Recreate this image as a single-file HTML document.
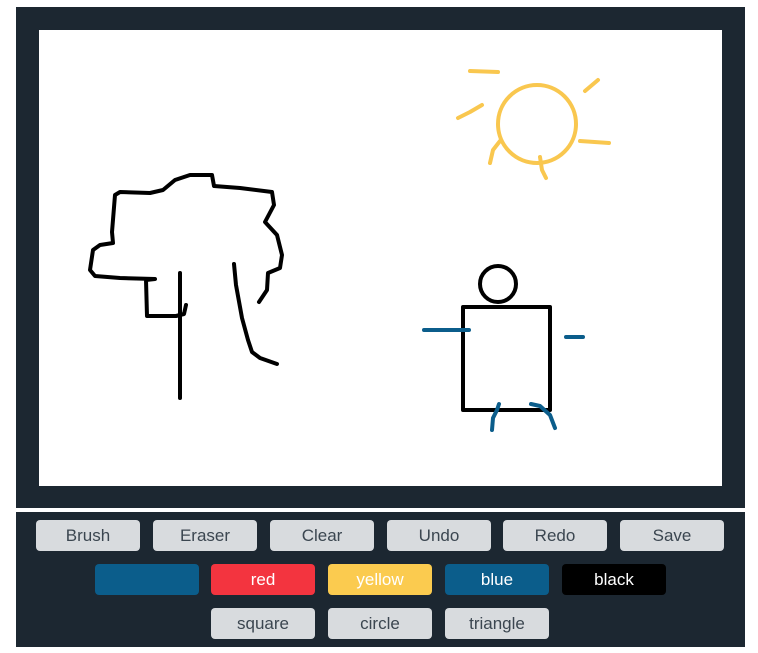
<!DOCTYPE html>
<html><head><style>
body{margin:0;width:758px;height:653px;background:#fff;position:relative;font-family:"Liberation Sans",sans-serif;overflow:hidden}
.frame{position:absolute;left:16px;top:7px;width:729px;height:501px;background:#1c2731}
.canvas{position:absolute;left:23px;top:23px;width:683px;height:456px;background:#fff}
.bar{position:absolute;left:16px;top:512px;width:729px;height:135px;background:#1c2731}
.b{position:absolute;height:31px;width:104px;border-radius:4px;background:#d8dbde;color:#3b4650;font-size:17px;text-align:center;line-height:31px}
.c{color:#fff}
</style></head><body>
<div class="frame"><div class="canvas"></div></div>
<svg style="position:absolute;left:0;top:0" width="758" height="510" fill="none" stroke-linecap="round" stroke-linejoin="round">
<g stroke="#000" stroke-width="4">
<path d="M186 305 L184 314 L176 316 L147 316 L146 280 L155 279 L120 278 L95 276 L90 270 L93 250 L100 245 L113 243 L112 232 L115 195 L120 192 L150 193 L163 190 L175 180 L190 175 L212 175 L214 186 L240 188 L272 192 L274 205 L265 222 L277 235 L282 255 L280 268 L268 273 L267 290 L259 302"/>
<path d="M180 273 L180 398"/>
<path d="M234 264 L236 285 L242 318 L248 340 L252 352 L260 358 L277 364"/>
<circle cx="498" cy="284" r="18"/>
<rect x="463" y="307" width="87" height="103"/>
</g>
<g stroke="#f9c74f" stroke-width="4">
<circle cx="537" cy="124" r="39"/>
<path d="M470 71 L498 72 M458 118 L470 112 L482 105 M585 91 L598 80 M580 141 L609 143 M490 163 L493 150 L500 141 M540 157 L542 170 L546 178"/>
</g>
<g stroke="#0b5d8b" stroke-width="4">
<path d="M424 330 L469 330 M566 337 L583 337 M492 430 L493 418 L497 410 L499 404 M531 404 L540 406 L550 415 L555 428"/>
</g>
</svg>
<div class="bar"></div>
<div class="b" style="left:36px;top:520px">Brush</div>
<div class="b" style="left:153px;top:520px">Eraser</div>
<div class="b" style="left:270px;top:520px">Clear</div>
<div class="b" style="left:387px;top:520px">Undo</div>
<div class="b" style="left:503px;top:520px">Redo</div>
<div class="b" style="left:620px;top:520px">Save</div>
<div class="b c" style="left:95px;top:564px;background:#0b5d8b"></div>
<div class="b c" style="left:211px;top:564px;background:#f3343f">red</div>
<div class="b c" style="left:328px;top:564px;background:#fbcb4f">yellow</div>
<div class="b c" style="left:445px;top:564px;background:#0b5d8b">blue</div>
<div class="b c" style="left:562px;top:564px;background:#000">black</div>
<div class="b" style="left:211px;top:608px">square</div>
<div class="b" style="left:328px;top:608px">circle</div>
<div class="b" style="left:445px;top:608px">triangle</div>
</body></html>
